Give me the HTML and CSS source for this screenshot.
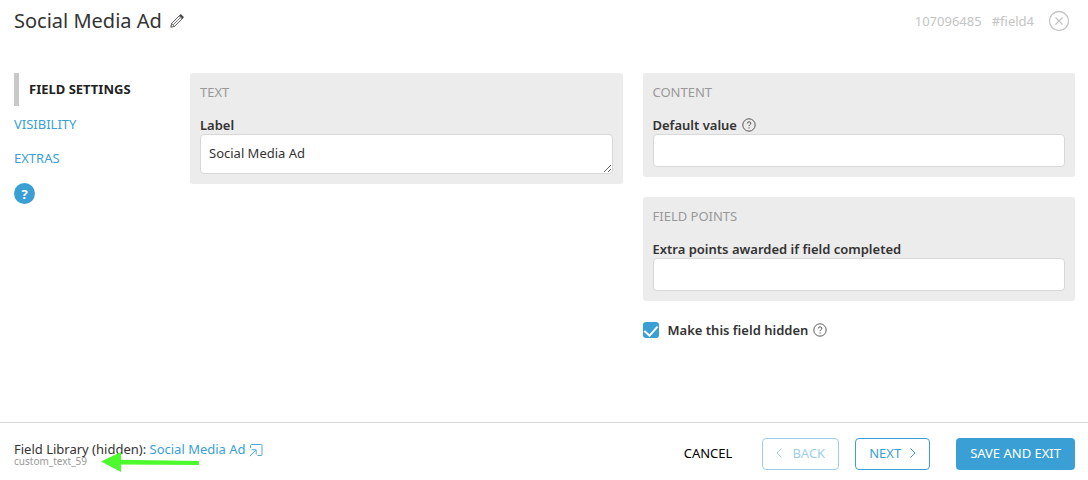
FILE: index.html
```html
<!DOCTYPE html>
<html lang="en">

<head>
    <meta charset="UTF-8">
    <meta name="viewport" content="width=device-width, initial-scale=1.0">
    <title>Social Media Ad</title>

    <link rel="stylesheet" href="styles.css">
</head>

<body>

    <header class="header">
        <h1>Social Media Ad</h1>
        <button class="icon-btn edit" type="button" aria-label="Edit name">
            <svg width="14" height="14" viewBox="0 0 14 14" fill="none" stroke="#444" stroke-width=".9">
                <path d="M.8 13.200l.8-3.700 7.900-7.900c.8-.8 1.700-.8 2.400-.1l.6.6c.7.700.7 1.600-.1 2.400L4.500 12.400z" />
                <path d="M1.700 9.500l2.800 2.800M3.200 10.800l7-7M9 2.200l2.800 2.800" stroke-width=".7" />
                <path d="M9.700 1.500l1.300-.6 2.100 2.100-.6 1.300z" fill="#444" />
            </svg>
        </button>
        <div class="ids">
            <span>107096485</span>
            <span>#field4</span>
        </div>
        <button class="icon-btn" type="button" aria-label="Close">
            <svg width="22" height="22" viewBox="0 0 22 22" fill="none" stroke="#c4c4c4" stroke-width="1.300">
                <circle cx="11" cy="11" r="9.500" />
                <path d="M7.500 7.500l7 7M14.500 7.500l-7 7" />
            </svg>
        </button>
    </header>

    <div class="content">
        <nav class="side">
            <a class="cur" href="#settings">FIELD SETTINGS</a>
            <a href="#visibility">VISIBILITY</a>
            <a href="#extras">EXTRAS</a>
            <button class="help" type="button" aria-label="Help">?</button>
        </nav>

        <main class="cols">
            <div class="col">
                <section class="panel">
                    <h2>TEXT</h2>
                    <label for="label">Label</label>
                    <textarea id="label" rows="1">Social Media Ad</textarea>
                </section>
            </div>
            <div class="col">
                <section class="panel">
                    <h2>CONTENT</h2>
                    <label for="default">Default value
                        <svg width="14" height="14" viewBox="0 0 14 14" fill="none" stroke="#333">
                            <circle cx="7" cy="7" r="6.200" stroke-width=".8" />
                            <path d="M5.300 5.500c0-2.200 3.500-2.200 3.500-.1 0 1.200-1.700 1.300-1.700 2.700M7.100 9.400v1.100" stroke-width=".9" />
                        </svg>
                    </label>
                    <input id="default" type="text">
                </section>
                <section class="panel">
                    <h2>FIELD POINTS</h2>
                    <label for="points">Extra points awarded if field completed</label>
                    <input id="points" type="text">
                </section>
                <div class="check">
                    <input id="hidden" type="checkbox" checked>
                    <label for="hidden">Make this field hidden
                        <svg width="14" height="14" viewBox="0 0 14 14" fill="none" stroke="#333">
                            <circle cx="7" cy="7" r="6.200" stroke-width=".8" />
                            <path d="M5.300 5.500c0-2.200 3.500-2.200 3.500-.1 0 1.200-1.700 1.300-1.700 2.700M7.100 9.400v1.100" stroke-width=".9" />
                        </svg>
                    </label>
                </div>
            </div>
        </main>
    </div>

    <footer class="footer">
        <div class="library">
            <p>Field Library (hidden): <a href="#library">Social Media Ad
                <svg width="14" height="14" viewBox="0 0 14 14" fill="none" stroke="#3a9fd5" stroke-width=".9">
                    <path d="M1.500 5V2.500q0-1 1-1h9.500q1 0 1 1v9q0 1-1 1H8.500" />
                    <path d="M.8 13.200l6-6M2.500 6.800h4.700v4.700" />
                </svg></a></p>
            <small>custom_text_59</small>
            <svg class="arrow" width="98" height="20" viewBox="0 0 98 20" fill="#4dfa2e">
                <path d="M0 9.500L20 0v7.800L98 9v4l-78-.6V20z" />
            </svg>
        </div>
        <button class="btn cancel" type="button">CANCEL</button>
        <button class="btn back" type="button" disabled>
            <svg width="6" height="10" viewBox="0 0 6 10" fill="none" stroke="currentColor"><path d="M5.500.5L1 5l4.500 4.500" /></svg>
            BACK
        </button>
        <button class="btn next" type="button">
            NEXT
            <svg width="6" height="10" viewBox="0 0 6 10" fill="none" stroke="currentColor"><path d="M.5.5L5 5 .5 9.500" /></svg>
        </button>
        <button class="btn save" type="button">SAVE AND EXIT</button>
    </footer>

</body>

</html>
```

FILE: styles.css
```css
* {
    margin: 0;
    padding: 0;
    box-sizing: border-box;
}

body {
    min-height: 100vh;
    display: flex;
    flex-direction: column;
    background: white;
    color: #333;
    font: 13px/18px "Noto Sans", "Open Sans", sans-serif;
}

a {
    color: #3a9fd5;
    text-decoration: none;
}

button,
input,
textarea {
    font: inherit;
    color: inherit;
}

button {
    border: 0;
    background: none;
    cursor: pointer;
}

svg {
    flex: none;
}

.header {
    display: flex;
    align-items: center;
    padding: 7px 18px 0 14px;
}

.header h1 {
    font-size: 20px;
    line-height: 28px;
    font-weight: 400;
}

.icon-btn {
    display: flex;
}

.edit {
    margin-left: 8px;
}

.ids {
    display: flex;
    gap: 10px;
    margin: 0 14px 0 auto;
    color: #c4c4c4;
}

.content {
    flex: 1;
    display: flex;
    padding: 38px 13px 20px 14px;
}

.side {
    width: 176px;
    flex: none;
    display: flex;
    flex-direction: column;
    align-items: flex-start;
    gap: 16px;
}

.side .cur {
    border-left: 5px solid #c8c8c8;
    margin-bottom: -7px;
    padding-left: 10px;
    line-height: 33px;
    font-weight: 700;
    color: #222;
}

.help {
    width: 21px;
    height: 21px;
    border-radius: 50%;
    background: #3a9fd5;
    color: white;
    font-weight: 700;
    line-height: 20px;
}

.cols {
    flex: 1;
    display: grid;
    grid-template-columns: 1fr 1fr;
    gap: 20px;
}

.col {
    display: flex;
    flex-direction: column;
    gap: 20px;
}

.panel {
    padding: 10px;
    border-radius: 3px;
    background: #ececec;
}

.panel h2 {
    margin-bottom: 15px;
    font-size: 13px;
    font-weight: 400;
    color: #999;
}

label {
    display: flex;
    align-items: center;
    gap: 5px;
    font-weight: 600;
}

.panel input,
textarea {
    display: block;
    width: 100%;
    height: 33px;
    padding: 9px 8px;
    border: 1px solid #d8d8d8;
    border-radius: 4px;
    background: white;
}

textarea {
    height: 40px;
    overflow: hidden;
    resize: vertical;
}

.check {
    display: flex;
    align-items: center;
    gap: 9px;
}

.check input {
    appearance: none;
    display: flex;
    justify-content: center;
    width: 16px;
    height: 16px;
    padding-top: 1px;
    border-radius: 3px;
    background: #3a9fd5;
}

.check input:checked::before {
    content: "";
    width: 6px;
    height: 11px;
    border: solid white;
    border-width: 0 2px 2px 0;
    transform: rotate(42deg);
}

.footer {
    display: flex;
    padding: 15px 13px 10px 14px;
    border-top: 1px solid #d8d8d8;
}

.library {
    position: relative;
    margin-right: auto;
    padding-top: 3px;
}

.library p {
    line-height: 16px;
}

.library p svg {
    vertical-align: -3px;
}

.library small {
    display: block;
    font-size: 10px;
    line-height: 8px;
    color: #999;
}

/* lies over the library text */
.arrow {
    position: absolute;
    left: 87px;
    top: 14px;
}

.btn {
    height: 32px;
    display: flex;
    align-items: center;
    border: 1px solid transparent;
    border-radius: 4px;
    padding: 0 13px 2px;
    line-height: 16px;
}

.cancel {
    margin-right: 16px;
    color: black;
}

.back {
    gap: 10px;
    margin-right: 16px;
    border-color: #9dcfea;
    color: #9dcfea;
}

.next {
    gap: 9px;
    margin-right: 26px;
    border-color: #3a9fd5;
    color: #3a9fd5;
}

.save {
    background: #3a9fd5;
    color: white;
}
```
